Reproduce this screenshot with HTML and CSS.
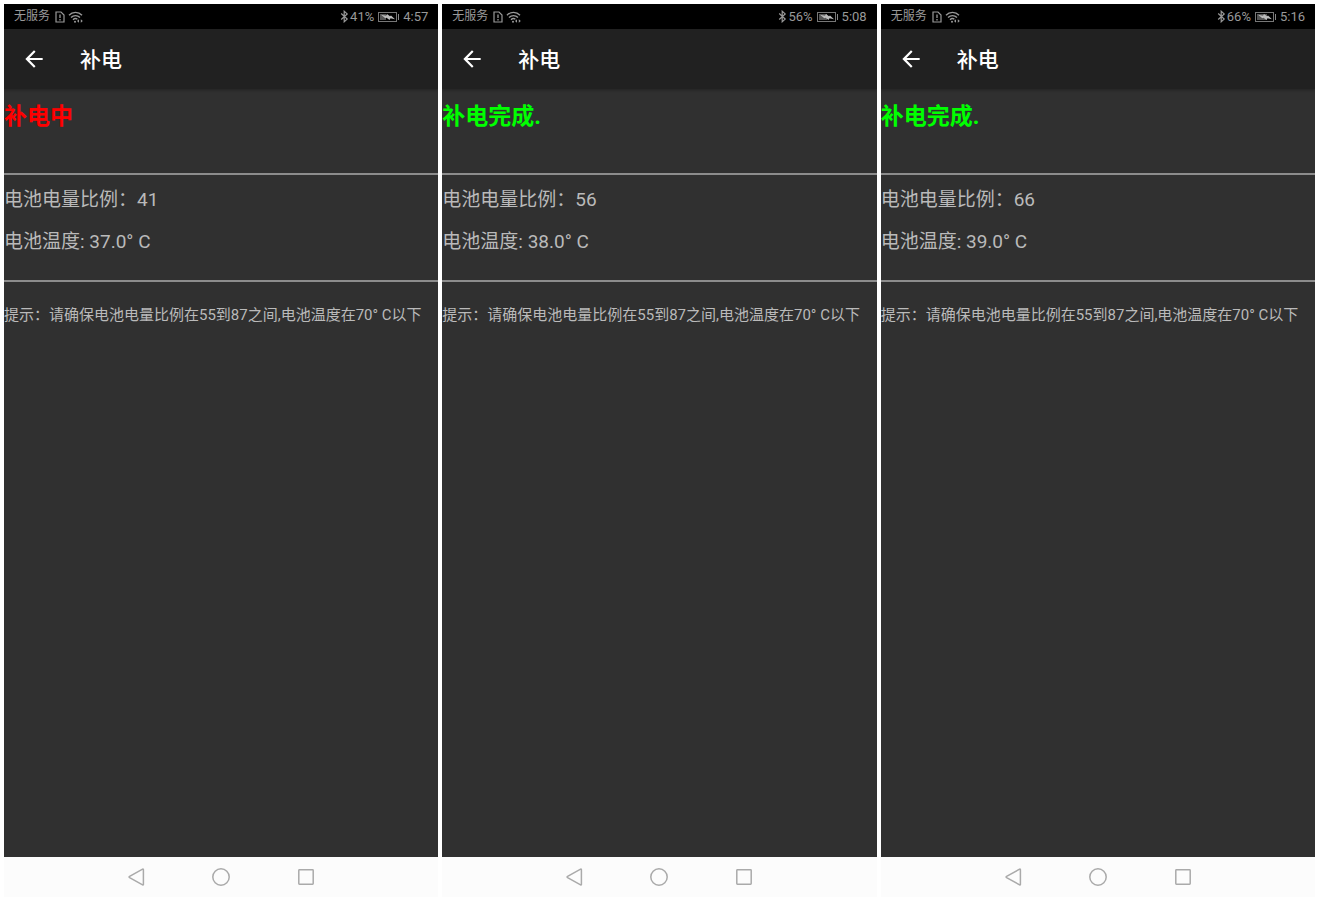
FILE: index.html
```html
<!DOCTYPE html>
<html lang="zh-CN">
<head>
    <meta charset="UTF-8">
    <meta name="viewport" content="width=device-width, initial-scale=1.0">
    <title>补电</title>
    <link rel="stylesheet" href="styles.css">
</head>
<body>
    <!-- Shared icons -->
    <svg class="icon-defs" aria-hidden="true">
        <symbol id="icon-sim" viewBox="0 0 10 12">
            <path d="M1 1h5l3 3v7H1z" fill="none" stroke="currentColor" stroke-width="1.2"/>
            <path d="M5 3.5v3.5M5 8v1.4" stroke="currentColor" stroke-width="1.3"/>
        </symbol>
        <symbol id="icon-wifi" viewBox="0 0 15 12">
            <path d="M1 4.2C4.6.4 10.4.4 14 4.2M3 6.6c2.6-2.6 6.4-2.6 9 0M5 8.8c1.4-1.4 3-1.5 4.4-.5" fill="none" stroke="currentColor" stroke-width="1.4"/>
            <circle cx="7" cy="10.7" r="1" fill="currentColor"/>
            <path d="M9 10l2-1.7v3.400zM14.800 10l-2-1.700v3.400z" fill="currentColor"/>
        </symbol>
        <symbol id="icon-bluetooth" viewBox="0 0 9 13">
            <path d="M1.2 3.5l6 5.6-3 2.7V1.2l3 2.700-6 5.600" fill="none" stroke="currentColor" stroke-width="1.2"/>
        </symbol>
        <symbol id="icon-bolt" viewBox="0 0 14 6">
            <path d="M0 .8l5 .9L6 0l3 2.200 1-.6 4 3.600-4.500-1-1 1.800-3-2.300-1.200.5z" fill="currentColor"/>
        </symbol>
        <symbol id="icon-back" viewBox="0 0 24 24">
            <path d="M20 11H7.830l5.590-5.590L12 4l-8 8 8 8 1.410-1.410L7.830 13H20v-2z" fill="currentColor"/>
        </symbol>
        <symbol id="icon-nav-back" viewBox="0 0 24 24">
            <path d="M19.400 4.600v14.800q0 .8-.8.400L5.600 12.700q-1-.7 0-1.400L18.600 4.200q.8-.4.8.4z" fill="none" stroke="currentColor" stroke-width="1.500"/>
        </symbol>
        <symbol id="icon-nav-home" viewBox="0 0 24 24">
            <circle cx="12" cy="12" r="8.200" fill="none" stroke="currentColor" stroke-width="1.500"/>
        </symbol>
        <symbol id="icon-nav-recent" viewBox="0 0 24 24">
            <rect x="4.800" y="4.800" width="14.400" height="14.400" rx=".6" fill="none" stroke="currentColor" stroke-width="1.500"/>
        </symbol>
    </svg>

    <main class="screens">
        <section class="phone">
            <div class="status-bar">
                <span class="carrier">无服务</span>
                <svg class="sim"><use href="#icon-sim"/></svg>
                <svg class="wifi"><use href="#icon-wifi"/></svg>
                <svg class="bluetooth"><use href="#icon-bluetooth"/></svg>
                <span>41%</span>
                <div class="battery">
                    <div class="battery-level" style="width: 41%"></div>
                    <svg class="bolt"><use href="#icon-bolt"/></svg>
                </div>
                <span>4:57</span>
            </div>
            <header class="app-bar">
                <button class="back" type="button" aria-label="返回"><svg><use href="#icon-back"/></svg></button>
                <h1>补电</h1>
            </header>
            <div class="content">
                <h2 class="state charging">补电中</h2>
                <div class="info">
                    <p>电池电量比例：41</p>
                    <p>电池温度: 37.0° C</p>
                </div>
                <p class="hint">提示：请确保电池电量比例在55到87之间,电池温度在70° C以下</p>
            </div>
            <nav class="nav-bar">
                <button type="button" aria-label="后退"><svg><use href="#icon-nav-back"/></svg></button>
                <button type="button" aria-label="主屏幕"><svg><use href="#icon-nav-home"/></svg></button>
                <button type="button" aria-label="最近任务"><svg><use href="#icon-nav-recent"/></svg></button>
            </nav>
        </section>

        <section class="phone">
            <div class="status-bar">
                <span class="carrier">无服务</span>
                <svg class="sim"><use href="#icon-sim"/></svg>
                <svg class="wifi"><use href="#icon-wifi"/></svg>
                <svg class="bluetooth"><use href="#icon-bluetooth"/></svg>
                <span>56%</span>
                <div class="battery">
                    <div class="battery-level" style="width: 56%"></div>
                    <svg class="bolt"><use href="#icon-bolt"/></svg>
                </div>
                <span>5:08</span>
            </div>
            <header class="app-bar">
                <button class="back" type="button" aria-label="返回"><svg><use href="#icon-back"/></svg></button>
                <h1>补电</h1>
            </header>
            <div class="content">
                <h2 class="state done">补电完成.</h2>
                <div class="info">
                    <p>电池电量比例：56</p>
                    <p>电池温度: 38.0° C</p>
                </div>
                <p class="hint">提示：请确保电池电量比例在55到87之间,电池温度在70° C以下</p>
            </div>
            <nav class="nav-bar">
                <button type="button" aria-label="后退"><svg><use href="#icon-nav-back"/></svg></button>
                <button type="button" aria-label="主屏幕"><svg><use href="#icon-nav-home"/></svg></button>
                <button type="button" aria-label="最近任务"><svg><use href="#icon-nav-recent"/></svg></button>
            </nav>
        </section>

        <section class="phone">
            <div class="status-bar">
                <span class="carrier">无服务</span>
                <svg class="sim"><use href="#icon-sim"/></svg>
                <svg class="wifi"><use href="#icon-wifi"/></svg>
                <svg class="bluetooth"><use href="#icon-bluetooth"/></svg>
                <span>66%</span>
                <div class="battery">
                    <div class="battery-level" style="width: 66%"></div>
                    <svg class="bolt"><use href="#icon-bolt"/></svg>
                </div>
                <span>5:16</span>
            </div>
            <header class="app-bar">
                <button class="back" type="button" aria-label="返回"><svg><use href="#icon-back"/></svg></button>
                <h1>补电</h1>
            </header>
            <div class="content">
                <h2 class="state done">补电完成.</h2>
                <div class="info">
                    <p>电池电量比例：66</p>
                    <p>电池温度: 39.0° C</p>
                </div>
                <p class="hint">提示：请确保电池电量比例在55到87之间,电池温度在70° C以下</p>
            </div>
            <nav class="nav-bar">
                <button type="button" aria-label="后退"><svg><use href="#icon-nav-back"/></svg></button>
                <button type="button" aria-label="主屏幕"><svg><use href="#icon-nav-home"/></svg></button>
                <button type="button" aria-label="最近任务"><svg><use href="#icon-nav-recent"/></svg></button>
            </nav>
        </section>
    </main>
</body>
</html>
```
FILE: styles.css
```css
* {
    box-sizing: border-box;
}
body {
    margin: 0;
    background-color: #fff;
    font-family: Roboto, "Noto Sans CJK SC", sans-serif;
}
h1, h2, p {
    margin: 0;
}
button {
    padding: 0;
    border: none;
    background: none;
    color: inherit;
    cursor: pointer;
}
svg {
    display: block;
}
.icon-defs {
    display: none;
}
.screens {
    display: grid;
    grid-template-columns: repeat(3, 1fr);
    gap: 4px;
    min-height: 100vh;
    padding: 4px;
}
.phone {
    display: flex;
    flex-direction: column;
    overflow: hidden; /* Keep the title bar shadow inside the screen */
    background-color: #303030;
    color: #bababa;
}
/* Status bar */
.status-bar {
    display: flex;
    align-items: center;
    gap: 3px;
    height: 25px;
    padding: 0 10px;
    background-color: #000;
    color: #999;
    font-size: 13px;
    line-height: 25px;
}
.carrier {
    margin-right: 2px;
    font-size: 12px;
}
.sim {
    width: 10px;
    height: 12px;
}
.wifi {
    width: 15px;
    height: 12px;
}
.bluetooth {
    width: 9px;
    height: 13px;
    margin-left: auto;
    margin-right: -2px;
}
.battery {
    position: relative;
    width: 19px;
    height: 10px;
    margin: 0 3px 0 1px;
    padding: 1px;
    border: 1px solid #777;
}
.battery::after {
    content: "";
    position: absolute;
    top: 1px;
    right: -3px;
    width: 1px;
    height: 6px;
    background-color: #888;
}
.battery-level {
    height: 100%;
    background-color: #555;
}
.bolt {
    position: absolute;
    top: 1px;
    left: 2px;
    width: 14px;
    height: 6px;
    color: #bbb;
}
/* Title bar */
.app-bar {
    display: flex;
    align-items: center;
    gap: 33px;
    height: 60px;
    padding: 0 17px;
    background-color: #212121;
    box-shadow: 0 1px 3px rgba(0, 0, 0, 0.3);
    color: #fff;
}
.back svg {
    width: 26px;
    height: 26px;
}
.app-bar h1 {
    padding-top: 2px;
    font-size: 21px;
    line-height: 30px;
    font-weight: 500;
}
/* Page content */
.content {
    flex: 1;
}
.state {
    height: 84px;
    padding-top: 11px;
    font-size: 23px;
    line-height: 34px;
    font-weight: bold;
}
.charging {
    color: #f00;
}
.done {
    color: #0f0;
}
.info {
    height: 109px;
    padding-top: 4px;
    border-top: 2px solid #8c8c8c;
    border-bottom: 2px solid #8c8c8c;
    font-size: 19px;
    line-height: 42px;
}
.hint {
    padding-top: 21px;
    font-size: 15px;
    line-height: 24px;
}
/* Navigation bar */
.nav-bar {
    display: flex;
    justify-content: center;
    align-items: center;
    gap: 61px;
    height: 40px;
    background-color: #fcfcfc;
    color: #aaa;
}
.nav-bar svg {
    width: 24px;
    height: 24px;
}
```
